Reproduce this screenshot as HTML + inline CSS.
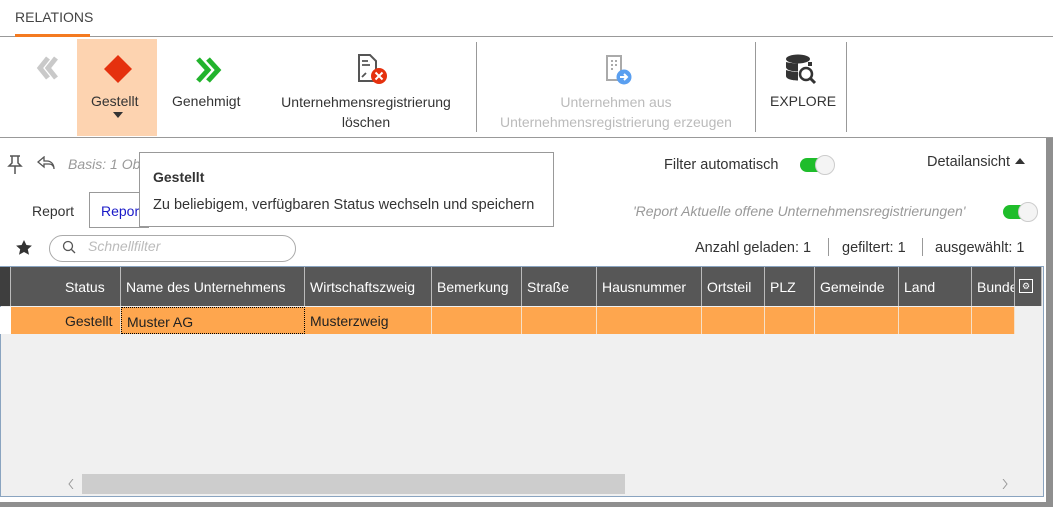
<!DOCTYPE html>
<html><head><meta charset="utf-8"><style>
*{box-sizing:border-box;margin:0;padding:0}
body{width:1053px;height:507px;overflow:hidden;background:#fff;font-family:"Liberation Sans",sans-serif;font-size:14px;color:#333;position:relative}
.a{position:absolute;white-space:nowrap}
.hd{position:absolute;top:267px;height:39px;background:#575757;color:#fff;border-right:1px solid #bbb;padding:12px 0 0 5px;font-size:14px;overflow:hidden}
.dc{position:absolute;top:307px;height:27px;background:#fea64e;border-right:1px solid #f5e0c8;padding:6px 0 0 5px;color:#222}
.tg{position:absolute;width:36px;height:20px}
.tg .t{position:absolute;left:0;top:3px;width:34px;height:14px;border-radius:7px;background:#1fbd2b}
.tg .k{position:absolute;left:15px;top:0;width:20px;height:20px;border-radius:50%;background:#f4f4f4;border:1px solid #ccc}
</style></head><body>
<div class="a" style="left:15px;top:9px;font-size:14px;color:#444">RELATIONS</div>
<div class="a" style="left:0;top:36px;width:1053px;height:1px;background:#999"></div>
<div class="a" style="left:15px;top:34px;width:75px;height:3px;background:#f47a20"></div>
<div class="a" style="left:77px;top:39px;width:80px;height:97px;background:#fdd3b0"></div>
<div class="a" style="left:0;top:137px;width:1053px;height:1px;background:#999"></div>
<div class="a" style="left:476px;top:42px;width:1px;height:90px;background:#999"></div>
<div class="a" style="left:755px;top:42px;width:1px;height:90px;background:#999"></div>
<div class="a" style="left:846px;top:42px;width:1px;height:90px;background:#999"></div>
<svg class="a" style="left:36px;top:56px" width="24" height="24"><path d="M12 2 4 12l8 10M20 2l-8 10 8 10" stroke="#c9c9c9" stroke-width="5" fill="none"/></svg>
<svg class="a" style="left:104px;top:55px" width="28" height="28"><path d="M14 0 28 14 14 28 0 14z" fill="#e5310e"/></svg>
<svg class="a" style="left:196px;top:57px" width="26" height="26"><path d="M2 2l10 11-10 11M12 2l10 11-10 11" stroke="#22b32d" stroke-width="5" fill="none"/></svg>
<svg class="a" style="left:357px;top:53px" width="32" height="34"><path d="M2 2h11l6 6v20H2z" stroke="#555" stroke-width="2" fill="#fff"/><path d="M5 8h6M5 12h8M5 24l4-4" stroke="#555" stroke-width="1.8"/><circle cx="22" cy="23" r="8" fill="#e5310e"/><path d="M18.5 19.5l7 7M25.5 19.5l-7 7" stroke="#fff" stroke-width="2"/></svg>
<svg class="a" style="left:604px;top:54px" width="34" height="34"><path d="M3 2h14v24H3z" stroke="#aaa" stroke-width="2" fill="#fff"/><path d="M7 7h2M11 7h2M7 11h2M11 11h2M7 15h2" stroke="#aaa" stroke-width="2"/><circle cx="20" cy="23" r="7.5" fill="#5a9ff0"/><path d="M16 23h6M20 20l3 3-3 3" stroke="#fff" stroke-width="2" fill="none"/></svg>
<svg class="a" style="left:784px;top:54px" width="34" height="32"><ellipse cx="14" cy="5" rx="12" ry="4.5" fill="#333"/><path d="M2 8v5c0 3 6 4.5 12 4.5V9.5C8 9.5 2 8 2 8zM2 16v6c0 3 6 4.5 12 4.5V18C8 18 2 16 2 16z" fill="#333"/><path d="M26 8v4" stroke="#333" stroke-width="4"/><circle cx="22" cy="20" r="6" stroke="#333" stroke-width="2.5" fill="#fff"/><path d="M26 24l5 5" stroke="#333" stroke-width="3"/></svg>
<div class="a" style="left:91px;top:93px">Gestellt</div>
<svg class="a" style="left:113px;top:112px" width="10" height="6"><path d="M0 0h10L5 6z" fill="#333"/></svg>
<div class="a" style="left:172px;top:93px">Genehmigt</div>
<div class="a" style="left:270px;top:92px;width:192px;text-align:center;line-height:20px;white-space:normal">Unternehmensregistrierung löschen</div>
<div class="a" style="left:486px;top:92px;width:260px;text-align:center;line-height:20px;white-space:normal;color:#bbb">Unternehmen aus Unternehmensregistrierung erzeugen</div>
<div class="a" style="left:770px;top:93px">EXPLORE</div>

<svg class="a" style="left:7px;top:155px" width="16" height="20"><path d="M3 1h10M5 1v7l-3 3h12l-3-3V1M8 11v8" stroke="#555" stroke-width="1.5" fill="none"/></svg>
<svg class="a" style="left:37px;top:156px" width="18" height="14"><path d="M7 1 1 6l6 5V8h5c3 0 5 2 5 5 0-5-3-8-7-8H7z" stroke="#555" stroke-width="1.3" fill="none"/></svg>
<div class="a" style="left:68px;top:156px;font-style:italic;color:#999;font-size:14px">Basis: 1 Ob</div>
<div class="a" style="left:32px;top:203px">Report</div>
<div class="a" style="left:89px;top:192px;width:60px;height:36px;border:1px solid #999;border-right:none;padding:10px 0 0 11px;color:#1a1ac8">Repor</div>
<div class="a" style="left:139px;top:152px;width:415px;height:75px;border:1px solid #999;background:#fff">
<div class="a" style="left:13px;top:16px;font-weight:bold">Gestellt</div>
<div class="a" style="left:13px;top:44px;font-size:14.5px">Zu beliebigem, verfügbaren Status wechseln und speichern</div></div>
<svg class="a" style="left:15px;top:239px" width="18" height="17"><path d="M9 1l2.4 5 5.5.6-4.1 3.7 1.2 5.4L9 13l-5 2.7 1.2-5.4L1.1 6.6l5.5-.6z" fill="#333"/></svg>
<div class="a" style="left:49px;top:235px;width:247px;height:27px;border:1px solid #aaa;border-radius:14px"></div>
<svg class="a" style="left:62px;top:240px" width="14" height="14"><circle cx="6" cy="6" r="4.5" stroke="#555" stroke-width="1.3" fill="none"/><path d="M9.5 9.5l3.5 3.5" stroke="#555" stroke-width="1.3"/></svg>
<div class="a" style="left:88px;top:238px;font-style:italic;color:#bbb;font-size:14px">Schnellfilter</div>

<div class="a" style="left:664px;top:157px;font-size:14.5px">Filter automatisch</div>
<div class="tg a" style="left:800px;top:155px"><div class="t"></div><div class="k"></div></div>
<div class="a" style="left:927px;top:154px;font-size:14.5px">Detailansicht</div>
<svg class="a" style="left:1015px;top:158px" width="10" height="6"><path d="M0 6h10L5 0z" fill="#333"/></svg>
<div class="a" style="left:633px;top:203px;font-style:italic;color:#999;font-size:14px">'Report Aktuelle offene Unternehmensregistrierungen'</div>
<div class="tg a" style="left:1003px;top:202px"><div class="t"></div><div class="k"></div></div>
<div class="a" style="left:695px;top:240px;font-size:14.5px">Anzahl geladen: 1</div>
<div class="a" style="left:828px;top:238px;width:1px;height:18px;background:#999"></div>
<div class="a" style="left:842px;top:240px;font-size:14.5px">gefiltert: 1</div>
<div class="a" style="left:922px;top:238px;width:1px;height:18px;background:#999"></div>
<div class="a" style="left:935px;top:240px;font-size:14.5px">ausgewählt: 1</div>

<div class="a" style="left:0;top:266px;width:1044px;height:231px;background:#f0f0f0;border:1px solid #8aa4c0"></div>
<div class="hd" style="left:0;width:11px;background:#3e3e3e"></div>
<div class="hd" style="left:11px;width:50px"></div>
<div class="hd" style="left:60px;width:61px">Status</div>
<div class="hd" style="left:121px;width:184px">Name des Unternehmens</div>
<div class="hd" style="left:305px;width:127px">Wirtschaftszweig</div>
<div class="hd" style="left:432px;width:90px">Bemerkung</div>
<div class="hd" style="left:522px;width:75px">Straße</div>
<div class="hd" style="left:597px;width:105px">Hausnummer</div>
<div class="hd" style="left:702px;width:63px">Ortsteil</div>
<div class="hd" style="left:765px;width:50px">PLZ</div>
<div class="hd" style="left:815px;width:84px">Gemeinde</div>
<div class="hd" style="left:899px;width:73px">Land</div>
<div class="hd" style="left:972px;width:43px">Bundesland</div>
<div class="hd" style="left:1015px;width:27px"><div style="position:absolute;left:4px;top:12px;width:14px;height:14px;border:1px solid #fff;font-size:9px;text-align:center;line-height:12px">⚙</div></div>
<div class="dc" style="left:0;width:11px;background:#fff;border:none"></div>
<div class="dc" style="left:11px;width:50px"></div>
<div class="dc" style="left:60px;width:61px">Gestellt</div>
<div class="dc" style="left:121px;width:184px;border:1px dotted #000">Muster AG</div>
<div class="dc" style="left:305px;width:127px">Musterzweig</div>
<div class="dc" style="left:432px;width:90px"></div>
<div class="dc" style="left:522px;width:75px"></div>
<div class="dc" style="left:597px;width:105px"></div>
<div class="dc" style="left:702px;width:63px"></div>
<div class="dc" style="left:765px;width:50px"></div>
<div class="dc" style="left:815px;width:84px"></div>
<div class="dc" style="left:899px;width:73px"></div>
<div class="dc" style="left:972px;width:43px"></div>
<div class="a" style="left:82px;top:474px;width:543px;height:20px;background:#cdcdcd"></div>
<svg class="a" style="left:68px;top:479px" width="6" height="10"><path d="M5 0 1 5l4 5" stroke="#999" fill="none"/></svg>
<svg class="a" style="left:1002px;top:479px" width="6" height="10"><path d="M1 0l4 5-4 5" stroke="#999" fill="none"/></svg>
<div class="a" style="left:0;top:502px;width:1053px;height:5px;background:#8f8f8f"></div>
<div class="a" style="left:1046px;top:138px;width:7px;height:369px;background:#8f8f8f"></div>
</body></html>
